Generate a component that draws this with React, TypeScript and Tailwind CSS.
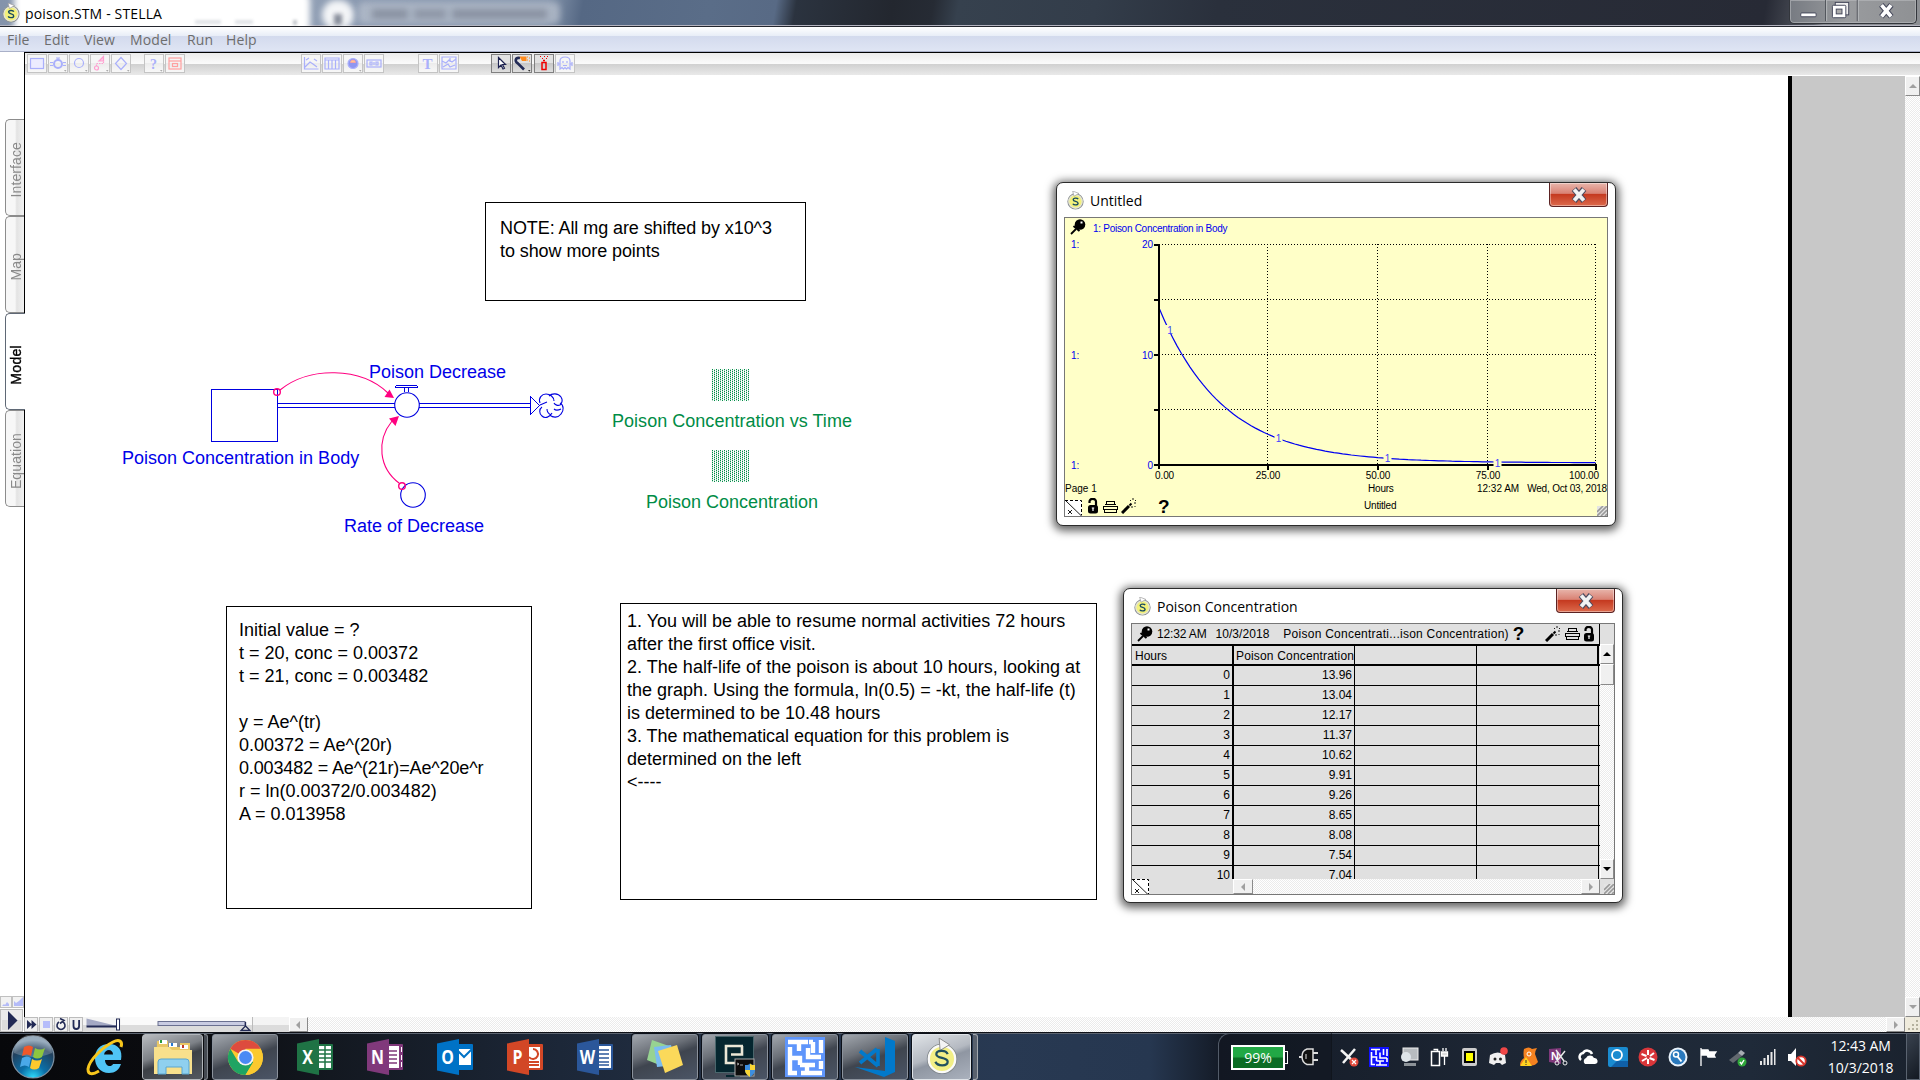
import React from "react";

const dither =
  "bg-[conic-gradient(#ffffff_25%,#ebebeb_0_50%,#ffffff_0_75%,#ebebeb_0)] bg-[length:2px_2px]";

function StellaLogo({ className }: { className?: string }) {
  return (
    <svg viewBox="0 0 20 20" className={className}>
      <circle cx="10" cy="11" r="8" fill="#f3f17c" stroke="#8b9099" strokeWidth="1.2" />
      <circle cx="10" cy="11" r="7" fill="none" stroke="#e4e4da" strokeWidth="1.2" />
      <path d="M7 0 L13.5 2.500 L8.5 5.500 Z" fill="#fff" stroke="#999" strokeWidth=".7" />
      <path d="M12.800 8.600 C12 7 7.600 7 7.600 9.100 C7.600 11.400 12.700 10.500 12.700 12.900 C12.700 15.200 8 15.100 7.200 13.400" fill="none" stroke="#174a5e" strokeWidth="1.400" />
    </svg>
  );
}

/* ---------- title, menu and toolbar ---------- */

function TitleBar() {
  return (
    <header className="relative flex h-[27px] shrink-0 items-center overflow-hidden border-b border-[#23262e] bg-[linear-gradient(100deg,#8493ab_0px,#93a1b6_300px,#8b9ab1_340px,#8595ac_540px,#556884_575px,#5a6d88_700px,#586a85_765px,#2b333f_785px,#23272f_880px,#262b34_920px,#36414e_945px,#333d4a_1080px,#2a303c_1200px,#272a35_1740px,#575b63_1790px,#8a8d92_1800px,#8d8f93_1920px)] shadow-[inset_0_-1px_0_#b4b4c0]">
      <div className="absolute -top-2 left-[14px] h-[42px] w-[296px] rounded-r-lg bg-white blur-[3px]" />
      <div className="absolute top-0 left-[322px] h-[30px] w-[32px] rounded-full bg-white/90 blur-[3px]" />
      <div className="absolute top-[2px] left-[358px] h-[22px] w-[202px] rounded-md bg-[#b4bdcb]/80 blur-[3px]" />
      <div className="absolute top-[9px] left-[372px] flex h-[10px] w-[175px] gap-[6px] blur-[3px]">
        <div className="w-[36px] bg-[#8a93a3]" />
        <div className="w-[32px] bg-[#8f98a8]" />
        <div className="flex-1 bg-[#8a93a3]" />
      </div>
      <div className="absolute top-[14px] left-[334px] h-[11px] w-[8px] bg-gray-500/80 blur-[2px]" />
      <div className="absolute top-[20px] left-[195px] flex gap-[14px] opacity-30 blur-[1.500px]">
        <div className="h-[4px] w-[26px] bg-gray-400" />
        <div className="h-[4px] w-[18px] bg-gray-400" />
        <div className="ml-[26px] h-[5px] w-[4px] bg-gray-700" />
      </div>
      <StellaLogo className="relative ml-px size-[20px]" />
      <h1 className="relative ml-[4px] font-['Open_Sans',sans-serif] text-[14px] tracking-[0.15px] whitespace-nowrap text-black">poison.STM - STELLA</h1>
      <div className="absolute top-0 left-[1789px] flex h-[24px] w-[128px] rounded-b-[5px] border border-t-0 border-[#33363c] bg-[linear-gradient(90deg,#777b82,#999b9e_45%,#8f9194)] shadow-[inset_0_0_0_1px_#b9bbbe99]">
        <svg viewBox="0 0 128 24" className="h-full w-full">
          <path d="M35.5 0V22M68.5 0V22" stroke="#44474e" />
          <path d="M36.500 0V22M69.5 0V22" stroke="#babcbf" />
          <rect x="9.500" y="13.500" width="16" height="4" rx="1" fill="#fff" stroke="#44475a" />
          <rect x="45.500" y="2.500" width="14" height="13" fill="#eee" stroke="#44475a" />
          <rect x="42.500" y="5.500" width="14" height="13" rx="1" fill="#fff" stroke="#44475a" />
          <rect x="46.500" y="9.500" width="6" height="5" fill="#aaa" stroke="#44475a" />
          <path d="M93.500 5L104 17.500M104 5L93.500 17.500" stroke="#44475a" strokeWidth="6" />
          <path d="M93.800 5.300L103.700 17.200M103.700 5.300L93.800 17.200" stroke="#fff" strokeWidth="3.800" />
        </svg>
      </div>
    </header>
  );
}

function MenuBar() {
  return (
    <nav className="flex h-[25px] shrink-0 items-center border-b border-[#a9b0c8] bg-[linear-gradient(#ffffff_0px,#e8edf7_9px,#d3daed_9px,#dfe5f4_24px)] pl-[7px] font-['Open_Sans',sans-serif] text-[14px] tracking-[0.1px] text-[#6d6d6d]">
      <span className="w-[37px]">File</span>
      <span className="w-[40px]">Edit</span>
      <span className="w-[46px]">View</span>
      <span className="w-[57px]">Model</span>
      <span className="w-[39px]">Run</span>
      <span>Help</span>
    </nav>
  );
}

function Tool({ children, active, corner }: { children: React.ReactNode; active?: boolean; corner?: boolean }) {
  return (
    <div className={active ? "h-[19px] w-[20px] border border-[#808080] bg-[linear-gradient(#e2e2e2_50%,#c8c8c8_50%,#dedede)]" : "h-[19px] w-[20px] border border-[#c4c4c4] bg-[linear-gradient(#f6f6f6_50%,#ececec_50%,#f8f8f8)]"}>
      <svg viewBox="0 0 18 17" className="h-[17px] w-[18px]" fill="none" stroke="#aab0fb" strokeWidth="1.2">
        {children}
        {corner && <path d="M15 15h2.500l-1.200 1.800z" fill={active ? "#333" : "#aaa"} stroke="none" />}
      </svg>
    </div>
  );
}

function Toolbar() {
  return (
    <div className="flex h-[23px] shrink-0 items-start border-l border-black bg-[linear-gradient(#ececec_0px,#fbfbfb_11px,#d0d0d0_11px,#e9e9e9_22px,#ffffff_22px)] pt-px pl-[2px]">
      <div className="flex gap-px">
        <Tool><rect x="2.500" y="3.500" width="13" height="10" fill="#ececff" /></Tool>
        <Tool corner><path d="M1 7.500h3M14 7.500h3M1 10.500h3M14 10.500h3M7 3h4M9 3v2" /><circle cx="9" cy="9" r="4" strokeWidth="2" /></Tool>
        <Tool corner><circle cx="9" cy="8" r="4.500" /></Tool>
        <Tool corner><path d="M5.500 11V8.500H12.500V5" stroke="#ff9fd0" strokeDasharray="1.500 1" /><path d="M8 6l4.500-4.500V6z" stroke="#ff9fd0" fill="#ffd0e8" /><circle cx="5.500" cy="13" r="2" stroke="#ff9fd0" /></Tool>
        <Tool corner><path d="M9 2.500L14.500 8.500L9 14.500L3.500 8.500Z" /></Tool>
      </div>
      <div className="ml-[13px] flex gap-px">
        <Tool corner><text x="5" y="14" fontSize="14" fontWeight="bold" fontFamily="Liberation Serif" fill="#aab0fb" stroke="none">?</text></Tool>
        <Tool><g stroke="#ffa0a0"><rect x="3" y="3" width="12" height="11" /><path d="M3 6h12" /><rect x="6.500" y="8.500" width="5" height="3" /></g></Tool>
      </div>
      <div className="ml-[116px] flex gap-px">
        <Tool><path d="M2.500 2v12h14M3 12l5-5 3 2 4 3M4 5l3-2M12 4l3 2" /></Tool>
        <Tool><path d="M2 3h14v11H2zM2 5h14M5.500 5v9M9 5v9M12.500 5v9" /></Tool>
        <Tool corner><circle cx="9" cy="8.500" r="5" fill="#8f96f0" /><path d="M6.500 7.500a2.500 2.500 0 0 1 5 0z" fill="#ffc890" stroke="#ff9f9f" strokeWidth=".8" /></Tool>
        <Tool><rect x="2" y="5" width="14" height="7" /><path d="M5 7v3h2V7zM9 7v3M11 7v3h2V7z" /></Tool>
      </div>
      <div className="ml-[34px] flex gap-px">
        <Tool><text x="3.500" y="14" fontSize="15" fontWeight="bold" fontFamily="Liberation Serif" fill="#aab0fb" stroke="none">T</text></Tool>
        <Tool><path d="M2 2h14v12H2zM2 6l4 2 3-3 3 2 4-3M3 12l5-3 2 3 5-2M10 3v4" /></Tool>
      </div>
      <div className="ml-[32px] flex gap-[1.400px]">
        <Tool active><path d="M6.500 2.500v10l2.500-2.500 2 4 1.500-.8-2-3.700h3z" stroke="#1d2250" fill="#fff" /></Tool>
        <Tool active corner><path d="M7 3C2 2 1.500 6.500 5 8.500l6 6" stroke="#222a55" strokeWidth="2.600" /><path d="M6.500 1.500h7v4.500H9z" fill="#ff8a1c" stroke="none" /><path d="M14 2h1M16 3h1M14 5h1M16 6h1" stroke="#ff8a1c" /></Tool>
        <Tool active><path d="M7 7.500h4v7H7zM8 5.500h2" stroke="#f00000" strokeWidth="1.500" /><path d="M5 1.500h1M9 1.500h1M12 1.500h1M7 3.500h1M11 3.500h1" stroke="#f00000" /></Tool>
        <Tool><path d="M4 14V6q0-4 5-4t5 4v8l-2-1.500-1.500 1.500-1.500-1.500-1.500 1.500L6 12.500zM2 9h2M14 9h2M2 7v4M16 7v4M7 6v2M11 6v2M7 10.500h4" /></Tool>
      </div>
    </div>
  );
}

/* ---------- left strip ---------- */

function SideTab({ label, selected }: { label: string; selected?: boolean }) {
  return (
    <div className={selected
      ? "ml-[5px] flex h-[97px] w-[20px] items-center justify-center rounded-l-[5px] border border-r-0 border-[#5f6875] bg-white pt-[7px] pl-px text-black"
      : "ml-[5px] flex h-[97px] w-[19px] items-center justify-center rounded-l-[5px] border border-r-0 border-[#8c8c8c] bg-[linear-gradient(90deg,#f7f7f7_50%,#e3e3e3_60%,#f2f2f2)] pt-[5px] pl-[3px] text-[#8a8a8a]"}>
      <span className={selected ? "rotate-180 text-[14px] tracking-[0.3px] [writing-mode:vertical-rl] [-webkit-text-stroke:0.4px_black]" : "rotate-180 text-[14px] tracking-[0.1px] [writing-mode:vertical-rl]"}>{label}</span>
    </div>
  );
}

function LeftStrip() {
  return (
    <aside className="relative z-10 flex h-full w-[24px] shrink-0 flex-col bg-white">
      <div className="mt-[67px]">
        <SideTab label="Interface" />
        <SideTab label="Map" />
        <SideTab label="Model" selected />
        <SideTab label="Equation" />
      </div>
      <div className="flex-1" />
      <svg viewBox="0 0 24 36" className="h-[36px] w-[24px]">
        <rect x=".5" y=".5" width="11" height="11" fill="#f2f2f2" stroke="#c0c0c0" />
        <rect x="12.500" y=".5" width="11" height="11" fill="#f2f2f2" stroke="#c0c0c0" />
        <path d="M2 10l2-2 1 1 2-3 2 2v2z" fill="#b4bbf8" />
        <path d="M14 10V5l2 2 3-2 4-4v9z" fill="#b4bbf8" />
        <rect x=".5" y="13.500" width="22" height="22" fill="#ececec" stroke="#bdbdbd" />
        <rect x="2" y="24" width="19" height="10" fill="#dcdcdc" />
        <path d="M8 15L17.500 24.500L8 34Z" fill="#222a55" />
      </svg>
    </aside>
  );
}

/* ---------- diagram ---------- */

function Diagram() {
  return (
    <svg viewBox="100 340 480 200" className="absolute top-[264px] left-[75px] h-[200px] w-[480px]" fill="none">
      <g stroke="#0000e0" strokeWidth="1" shapeRendering="crispEdges">
        <rect x="211.500" y="389.500" width="66" height="52" />
        <path d="M278 403.500H395M278 407.500H395M419 403.500H530.500M419 407.500H530.500" />
        <path d="M530.500 396.500V414.500L539.500 405.500Z" />
        <path d="M395 387.500V386.500L397 385.500H416L417.500 386.500V387.500Z" />
        <path d="M404.500 388V392M408.500 388V392" />
      </g>
      <g stroke="#0000e0" strokeWidth="1.1">
        <circle cx="407" cy="405" r="12.300" />
        <circle cx="413" cy="495" r="12.300" />
        <path d="M540 403c-2-5 2-9 6-9 4 0 8 3 8 7M549 396c3-3 9-3 12 1 2 3 1 6-1 8-2 1-5 0-6-2M560 403c4 2 4 8 1 11-3 4-8 4-11 1M554 409c1 1 3 2 7 0M552 413c-2 4-7 6-10 3-3-2-3-7 0-9M547 409c0 3 2 5 4 6M540 405l7-3" />
      </g>
      <g stroke="#ff0080" strokeWidth="1.100">
        <path d="M280 390C309 366 361 367 388 393" />
        <path d="M399 483C379 468 376 441 392 421" />
        <circle cx="277" cy="392" r="3.300" strokeWidth="1.400" />
        <circle cx="402" cy="486" r="3.300" strokeWidth="1.400" />
      </g>
      <path d="M394 398L389.500 389.500L384.500 397Z" fill="#ff0080" />
      <path d="M399 416L389 418.500L395.500 426Z" fill="#ff0080" />
    </svg>
  );
}

function NodeLabel({ className, children }: { className: string; children: React.ReactNode }) {
  return <span className={"absolute text-[18px] leading-[23px] whitespace-nowrap " + className}>{children}</span>;
}

function StippledIcon({ className, id }: { className: string; id: string }) {
  return (
    <svg viewBox="0 0 37 32" className={"absolute h-[32px] w-[37px] " + className} shapeRendering="crispEdges">
      <pattern id={id} width="4" height="2" patternUnits="userSpaceOnUse">
        <rect width="1" height="1" fill="#008c46" />
        <rect x="2" y="1" width="1" height="1" fill="#008c46" />
        <rect x="0" y="1" width="1" height="1" fill="#008c46" opacity=".3" />
        <rect x="2" y="0" width="1" height="1" fill="#008c46" opacity=".3" />
      </pattern>
      <rect width="37" height="32" fill={`url(#${id})`} />
    </svg>
  );
}

/* ---------- floating windows ---------- */

const Pin = () => (
  <svg viewBox="0 0 16 16" className="size-[16px]">
    <circle cx="10" cy="5.500" r="5.300" />
    <rect x="10.500" y="2.500" width="2" height="2" fill="#fff" />
    <path d="M6 10L1 15" stroke="#000" strokeWidth="1.800" />
    <path d="M3.500 7l6 5" stroke="#000" strokeWidth="2" />
  </svg>
);
const Lock = () => (
  <svg viewBox="0 0 12 16" className="h-[16px] w-[12px]">
    <path d="M2.500 5V3.500a3 2.500 0 0 1 6.500 0V8" fill="none" stroke="#000" strokeWidth="2.200" />
    <rect x="1" y="7" width="10" height="8.500" rx="2.500" />
    <path d="M6 9.500v3.500M4.800 10h2.400" stroke="#fff" strokeWidth="1.200" />
  </svg>
);
const Printer = () => (
  <svg viewBox="0 0 16 14" className="h-[14px] w-[16px]" fill="none" stroke="#000" shapeRendering="crispEdges">
    <path d="M4.500 5V1.500H12.500V5M2.500 4.500H13.500M1.500 6.500H15.500V9.500H1.500ZM2.500 9.500V12.500H14.500V9.500" />
  </svg>
);
const Wand = () => (
  <svg viewBox="0 0 16 16" className="size-[16px]">
    <path d="M1 15L8 8" stroke="#000" strokeWidth="3" />
    <path d="M8.500 7.500L10.500 5.500" stroke="#000" strokeWidth="2" />
    <path d="M9 2l1 1M12 0v2M15 2l-1 1M13 5h2M13.500 8l1 1M11 8v2" stroke="#000" strokeWidth=".9" />
  </svg>
);
const PageCorner = () => (
  <svg viewBox="0 0 17 16" className="h-[16px] w-[17px]" fill="none" stroke="#000">
    <rect width="17" height="16" fill="#fff" stroke="none" />
    <path d="M0 .5H16.500V15.500" strokeDasharray="3 2" />
    <path d="M1 1L16 15.500M3 10l4 4M7 10l-4 4" strokeWidth=".9" />
  </svg>
);
const Grip = () => (
  <svg viewBox="0 0 10 10" className="size-[10px]" stroke="#999" strokeWidth="1.600">
    <rect width="10" height="10" fill="#e4e4e4" stroke="none" />
    <path d="M0 10L10 0M4 10L10 4M8 10L10 8M0 6L6 0" />
  </svg>
);

function CloseButton() {
  return (
    <div className="flex h-[24px] w-[59px] items-center justify-center rounded-b-[4px] border border-t-0 border-[#5b2222] bg-[linear-gradient(#e8b6ac_0%,#d98274_45%,#c53a20_50%,#dc6a4c_100%)] shadow-[inset_0_0_0_1px_#ffffff66]">
      <svg viewBox="0 0 18 16" className="h-[16px] w-[18px]">
        <path d="M4 2L14 14M14 2L4 14" stroke="#4c4c60" strokeWidth="6" />
        <path d="M4.200 2.400L13.800 13.600M13.800 2.400L4.200 13.600" stroke="#f2f2f2" strokeWidth="3.800" />
      </svg>
    </div>
  );
}

function FloatWindow({ title, className, children }: { title: string; className: string; children: React.ReactNode }) {
  return (
    <section className={"absolute flex flex-col rounded-[7px] border border-[#2b2b2b] bg-white px-[7px] shadow-[0_2px_9px_3px_rgba(0,0,0,0.6)] " + className}>
      <div className="flex h-[34px] shrink-0 items-start justify-between">
        <div className="flex items-center gap-[5px] pt-[7px] pl-[2px]">
          <StellaLogo className="size-[19px]" />
          <h2 className="font-['Open_Sans',sans-serif] text-[14px] leading-[21px] text-black">{title}</h2>
        </div>
        <CloseButton />
      </div>
      {children}
    </section>
  );
}

const decay = Array.from({ length: 101 }, (_, t) => {
  const y = 244.8 - 11.01 * 13.96 * Math.exp(-0.0677 * t);
  return `${(94.5 + t * 4.36).toFixed(1)},${y.toFixed(1)}`;
}).join(" ");

const seriesMarks = [[105, 112], [213.500, 220], [322.500, 240], [432.500, 244.500]];

function GraphWindow() {
  return (
    <FloatWindow title="Untitled" className="top-[106px] left-[1031px] h-[344px] w-[560px]">
      <div className="relative h-[300px] w-[544px] overflow-hidden border border-[#777] bg-[#ffffc8] text-[10px] leading-[12px] text-black">
        <svg viewBox="0 0 543 298" className="absolute inset-0 h-[298px] w-[543px]">
          <g stroke="#000" strokeDasharray="1 2" fill="none" shapeRendering="crispEdges">
            <path d="M94 26.500H531M94 81.500H531M94 136.500H531M94 191.500H531" />
            <path d="M202.500 26V246M312.500 26V246M422.500 26V246M530.500 26V246" />
          </g>
          <polyline points={decay} fill="none" stroke="#0000f0" strokeWidth="1.200" />
          <path d="M94 26V251M89 27H94M89 82H94M89 137H94M89 192H94M89 247H532M531 246V252M203 247V252M313 247V252M423 247V252" fill="none" stroke="#000" strokeWidth="2" shapeRendering="crispEdges" />
          {seriesMarks.map(([x, y]) => (
            <g key={x}>
              <rect x={x - 4} y={y - 5} width="8" height="9" fill="#ffffc8" />
              <text x={x} y={y + 4} textAnchor="middle" fontSize="10" fill="#4040ff">1</text>
            </g>
          ))}
        </svg>
        <div className="absolute top-px left-[5px]"><Pin /></div>
        <span className="absolute top-[5px] left-[28px] tracking-[-0.28px] whitespace-nowrap text-[#0000f0]">1: Poison Concentration in Body</span>
        <div className="absolute top-[21px] left-[6px] flex h-[233px] w-[82px] flex-col justify-between text-[#0000f0]">
          <p className="flex justify-between"><span>1:</span><span>20</span></p>
          <p className="flex justify-between"><span>1:</span><span>10</span></p>
          <p className="flex justify-between"><span>1:</span><span>0</span></p>
        </div>
        <div className="absolute top-[252px] left-[90px] flex w-[444px] tracking-[-0.1px]">
          <span className="w-[58px]">0.00</span>
          <span className="w-[110px] text-center">25.00</span>
          <span className="w-[110px] text-center">50.00</span>
          <span className="w-[110px] text-center">75.00</span>
          <span className="flex-1 text-right">100.00</span>
        </div>
        <span className="absolute top-[265px] left-0">Page 1</span>
        <span className="absolute top-[265px] left-[303px] tracking-[-0.2px]">Hours</span>
        <div className="absolute top-[265px] right-0 flex gap-[8px] tracking-[-0.2px] whitespace-nowrap">
          <span className="tracking-normal">12:32 AM</span>
          <span>Wed, Oct 03, 2018</span>
        </div>
        <span className="absolute top-[282px] left-[299px] tracking-[-0.2px]">Untitled</span>
        <div className="absolute bottom-0 left-0 flex items-end gap-[5px]">
          <PageCorner />
          <div className="mb-[2px] flex items-end gap-[3px]"><Lock /><Printer /><Wand /></div>
        </div>
        <span className="absolute top-[279px] left-[93px] text-[19px] leading-[19px] font-bold">?</span>
        <div className="absolute right-0 bottom-0"><Grip /></div>
      </div>
    </FloatWindow>
  );
}

const rows: [string, string][] = [
  ["0", "13.96"], ["1", "13.04"], ["2", "12.17"], ["3", "11.37"], ["4", "10.62"], ["5", "9.91"],
  ["6", "9.26"], ["7", "8.65"], ["8", "8.08"], ["9", "7.54"], ["10", "7.04"],
];

function ScrollArrow({ d, className, color = "#a0a0a0" }: { d: string; className: string; color?: string }) {
  return (
    <div className={"flex shrink-0 items-center justify-center border border-r-[#8a8a8a] border-b-[#8a8a8a] border-t-white border-l-white bg-[#f0f0f0] " + className}>
      <svg viewBox="0 0 8 8" className="size-[8px]"><path d={d} fill={color} /></svg>
    </div>
  );
}

function TableWindow() {
  return (
    <FloatWindow title="Poison Concentration" className="top-[512px] left-[1098px] h-[315px] w-[500px]">
      <div className="flex h-[272px] w-[484px] border border-[#777] bg-[#e0e0e0] text-[12px] leading-[18px] text-black">
        <div className="flex w-[468px] flex-col">
          <div className="flex h-[20px] shrink-0 items-center border-r border-black pr-[4px] pl-[5px]">
            <Pin />
            <span className="ml-[4px] tracking-[-0.15px]">12:32 AM</span>
            <span className="ml-[9px] tracking-[0.05px]">10/3/2018</span>
            <span className="ml-[14px] tracking-[0.25px] whitespace-nowrap">Poison Concentrati...ison Concentration)</span>
            <span className="ml-[4px] text-[19px] leading-[18px] font-bold">?</span>
            <div className="ml-auto flex items-center gap-[3px]"><Wand /><Printer /><Lock /></div>
          </div>
          <div className="h-[235px] overflow-hidden">
            <div className="grid h-[22px] grid-cols-[102px_121px_122px_122px] border-y-2 border-black">
              <span className="border-r-2 border-black pl-[3px] leading-[20px]">Hours</span>
              <span className="overflow-hidden border-r border-black pl-[2px] leading-[20px] tracking-[0.17px] whitespace-nowrap">Poison Concentration</span>
              <span className="border-r border-black" />
              <span className="border-r-2 border-black" />
            </div>
            {rows.map(([hour, value]) => (
              <div key={hour} className="grid h-[20px] grid-cols-[102px_121px_122px_122px] border-b border-black text-right">
                <span className="border-r-2 border-black pr-[2px]">{hour}</span>
                <span className="border-r border-black pr-[2px]">{value}</span>
                <span className="border-r border-black" />
                <span className="border-r border-black" />
              </div>
            ))}
          </div>
          <div className="flex h-[15px] shrink-0">
            <div className="h-[15px] w-[101px] overflow-hidden"><PageCorner /></div>
            <ScrollArrow d="M6 0v8L2 4z" className="w-[20px]" />
            <div className={"flex-1 " + dither} />
            <ScrollArrow d="M2 0v8L6 4z" className="w-[19px]" />
          </div>
        </div>
        <div className="flex w-[14px] flex-col pt-[20px]">
          <ScrollArrow d="M0 6h8L4 2z" className="h-[20px]" color="#000" />
          <div className="h-[21px] border border-r-[#8a8a8a] border-b-[#8a8a8a] border-t-white border-l-white bg-[#f0f0f0]" />
          <div className={"flex-1 " + dither} />
          <ScrollArrow d="M0 2h8L4 6z" className="h-[20px]" color="#000" />
          <div className="flex h-[15px] items-end justify-end"><Grip /></div>
        </div>
      </div>
    </FloatWindow>
  );
}

/* ---------- canvas ---------- */

function Canvas() {
  return (
    <main className="relative flex-1 border-l border-black bg-white text-[18px] leading-[23px] text-black">
      <div className="absolute top-[126px] left-[460px] h-[99px] w-[321px] border border-black pt-[14px] pl-[14px] tracking-[-0.08px]">
        <p>NOTE: All mg are shifted by x10^3</p>
        <p>to show more points</p>
      </div>
      <Diagram />
      <NodeLabel className="top-[285px] left-[344px] text-[#0000e8]">Poison Decrease</NodeLabel>
      <NodeLabel className="top-[371px] left-[97px] text-[#0000e8]">Poison Concentration in Body</NodeLabel>
      <NodeLabel className="top-[439px] left-[319px] text-[#0000e8]">Rate of Decrease</NodeLabel>
      <StippledIcon id="stipple-graph" className="top-[293px] left-[687px]" />
      <NodeLabel className="top-[334px] left-[587px] tracking-[0.03px] text-[#008c46]">Poison Concentration vs Time</NodeLabel>
      <StippledIcon id="stipple-table" className="top-[374px] left-[687px]" />
      <NodeLabel className="top-[415px] left-[621px] text-[#008c46]">Poison Concentration</NodeLabel>
      <div className="absolute top-[530px] left-[201px] h-[303px] w-[306px] border border-black pt-[12px] pl-[12px]">
        <p>Initial value = ?</p>
        <p>t = 20, conc = 0.00372</p>
        <p>t = 21, conc = 0.003482</p>
        <p>&nbsp;</p>
        <p>y = Ae^(tr)</p>
        <p>0.00372 = Ae^(20r)</p>
        <p className="tracking-[-0.15px]">0.003482 = Ae^(21r)=Ae^20e^r</p>
        <p>r = ln(0.00372/0.003482)</p>
        <p>A = 0.013958</p>
      </div>
      <div className="absolute top-[527px] left-[595px] h-[297px] w-[477px] border border-black pt-[6px] pl-[6px] whitespace-nowrap">
        <p>1. You will be able to resume normal activities 72 hours</p>
        <p>after the first office visit.</p>
        <p className="tracking-[0.02px]">2. The half-life of the poison is about 10 hours, looking at</p>
        <p>the graph. Using the formula, ln(0.5) = -kt, the half-life (t)</p>
        <p>is determined to be 10.48 hours</p>
        <p className="tracking-[-0.04px]">3. The mathematical equation for this problem is</p>
        <p>determined on the left</p>
        <p>&lt;----</p>
      </div>
      <GraphWindow />
      <TableWindow />
    </main>
  );
}

function ControlRow() {
  return (
    <div className="flex h-[15px] shrink-0">
      <svg viewBox="0 0 265 15" className="h-[15px] w-[265px] shrink-0" fill="none">
        <rect width="265" height="15" fill="#f4f4f4" />
        <rect y="8" width="265" height="7" fill="#dcdcdc" />
        <g fill="#f0f0f0" stroke="#bcbcbc"><rect x=".5" y=".5" width="13" height="14" /><rect x="15.500" y=".5" width="13" height="14" /><rect x="30.500" y=".5" width="13" height="14" /><rect x="45.500" y=".5" width="13" height="14" /></g>
        <path d="M3 3l5 4.500L3 12zM7.500 3l5 4.500L7.500 12z" fill="#222a55" />
        <rect x="19" y="4" width="7" height="7" fill="#b6bdfa" />
        <path d="M35 5a4 4 0 1 0 4 0M36 1.500l4 2-4 3" stroke="#222a55" strokeWidth="1.600" />
        <path d="M49.500 3v6q0 3 2.800 3t2.800-3V3" stroke="#222a55" strokeWidth="1.800" />
        <path d="M62.500 1.500L93 9H62.500Z" fill="#a4a9c4" />
        <path d="M62.500 9.500H93" stroke="#222a55" strokeWidth="2" />
        <rect x="92.500" y="2" width="3" height="11" fill="#fff" stroke="#222a55" />
        <rect x="97" y="0" width="131" height="8" fill="#fafafa" />
        <rect x="134" y="4.500" width="87" height="4" fill="#c9cce2" stroke="#6a7090" />
        <path d="M221.500 5v4M217 13.500h9l-4.500-4.500z" stroke="#222a55" strokeWidth="1.300" />
        <path d="M228.500 0v15" stroke="#bbb" />
      </svg>
      <ScrollArrow d="M5 0v8L1 4z" className="w-[19px]" />
      <div className={"flex-1 " + dither} />
      <ScrollArrow d="M2 0v8L6 4z" className="w-[19px]" />
      <svg viewBox="0 0 15 15" className="size-[15px] shrink-0"><rect width="15" height="15" fill="#efebdc" /><path d="M11 3h2v2h-2zM11 7h2v2h-2zM11 11h2v2h-2zM7 7h2v2H7zM7 11h2v2H7zM3 11h2v2H3z" fill="#b5b19d" /></svg>
    </div>
  );
}

/* ---------- taskbar ---------- */

function Slot({ kind = "plain", children }: { kind?: "plain" | "open" | "active"; children: React.ReactNode }) {
  const look = {
    plain: "flex h-[46px] w-[66px] shrink-0 items-center justify-center",
    open: "flex h-[46px] w-[66px] shrink-0 items-center justify-center rounded-[3px] border border-[#8b929c] bg-[linear-gradient(160deg,#a2a7ae_0%,#6b7078_35%,#3f454f_52%,#4b5566_100%)] shadow-[0_0_0_1px_#0c1018]",
    active: "flex h-[46px] w-[59px] shrink-0 items-center justify-center rounded-[3px] border border-[#dfe3e8] bg-[linear-gradient(160deg,#e0e3e7_0%,#b4b9c1_45%,#8f96a2_55%,#aab1bd_100%)] shadow-[0_0_0_1px_#0c1018]",
  }[kind];
  return <div className={look}>{children}</div>;
}

function OfficeIcon({ letter, color, children }: { letter: string; color: string; children: React.ReactNode }) {
  return (
    <svg viewBox="0 0 36 36" className="size-[36px]">
      <rect x="16" y="5" width="20" height="26" rx="1" fill={color} />
      {children}
      <path d="M0 4.500L22 0V36L0 31.500Z" fill={color} />
      <text transform="translate(10.500 25) scale(.84 1)" textAnchor="middle" fontFamily="Open Sans" fontWeight="bold" fontSize="19" fill="#fff">{letter}</text>
    </svg>
  );
}

const tray: { id: string; art: React.ReactNode }[] = [
  { id: "pen", art: <><path d="M2 3l13 12M4 16L16 2" stroke="#f4f4f4" strokeWidth="2.500" /><circle cx="15" cy="15" r="4.500" fill="#e24a3c" /><path d="M13 13l4 4M17 13l-4 4" stroke="#fff" strokeWidth="1.200" /></> },
  { id: "maze", art: <><rect width="20" height="20" fill="#1010ff" /><path d="M2 2.500H11M7 2.500V8M11 5.500V11H18M14.500 2V8M18 2V9M2.500 5V17.500H6M2.500 10H7.500V14M7.500 14H15M11 14V18M7 18H18M18 11V15" stroke="#fff" strokeWidth="1.600" fill="none" /></> },
  { id: "display", art: <><rect x="4" y="1" width="15" height="12" fill="#b8bcc0" stroke="#eee" /><circle cx="7" cy="10" r="5" fill="#dfe5ea" /><path d="M5 16h12v3H5z" fill="#8c9298" /></> },
  { id: "battery", art: <><path d="M2.500 4.500h8v14h-8zM4.500 2.500h4v2" fill="none" stroke="#fff" strokeWidth="1.500" /><path d="M12.500 5h6v4h-6zM14 1v3M17 1v3M15.500 9v9" stroke="#fff" strokeWidth="1.300" fill="#ddd" /></> },
  { id: "chip", art: <><rect x="3" y="1" width="15" height="18" rx="2" fill="#ccc" /><rect x="5" y="4" width="11" height="12" fill="#000" /><rect x="7" y="6" width="7" height="8" fill="#ffff00" /></> },
  { id: "discord", art: <><path d="M2 8q8-5 15 0l1 8-4 2-2-2H8l-2 2-5-2z" fill="#f0f0f0" /><circle cx="7" cy="12" r="1.500" fill="#222" /><circle cx="12.500" cy="12" r="1.500" fill="#222" /><circle cx="16" cy="4" r="3.800" fill="#f04747" /></> },
  { id: "avast", art: <><path d="M6 2q5-3 8 0l5-1q-2 3-2 6l3 8q-4 5-9 3-5 2-9 0 0-4 4-7-1-5 0-9z" fill="#f58220" /><path d="M8 10l6 9H2z" fill="#ffd21f" /><path d="M8 13v3M8 17v1" stroke="#333" fill="none" /><circle cx="11" cy="7" r="2" fill="none" stroke="#fff" /></> },
  { id: "onenote-clip", art: <><path d="M1 2l12-1v16L1 15z" fill="#80397b" /><text x="3" y="13" fontSize="11" fontWeight="bold" fill="#fff">N</text><path d="M8 3l8 11M17 4L9 14" stroke="#e8e8e8" strokeWidth="1.500" /><circle cx="9" cy="16" r="2" fill="none" stroke="#eee" /><circle cx="17" cy="16" r="2" fill="none" stroke="#eee" /></> },
  { id: "cloud", art: <><path d="M3 13a4 4 0 0 1 2-7 5 5 0 0 1 9 1" fill="none" stroke="#fff" strokeWidth="2.500" /><path d="M7 17a3.500 3.500 0 0 1 1-6 4.500 4.500 0 0 1 8 0 3 3 0 0 1 1 6z" fill="#fff" /></> },
  { id: "update", art: <><rect width="20" height="20" rx="2" fill="#1a8bd0" /><circle cx="9" cy="8" r="5" fill="none" stroke="#fff" strokeWidth="1.800" /><path d="M9 14h11v6H3z" fill="#1060a8" /></> },
  { id: "red", art: <><circle cx="10" cy="10" r="9.500" fill="#d9363a" /><path d="M10 3v5M10 12v5M3.500 7l5 2M11.500 11l5 2M4 14l5-3M12 9l4-3" stroke="#fff" strokeWidth="2" /></> },
  { id: "key", art: <><circle cx="10" cy="10" r="9.500" fill="#eaf3fb" /><circle cx="10" cy="10" r="7.500" fill="#2a79bd" /><circle cx="8" cy="7.500" r="2.500" fill="none" stroke="#fff" strokeWidth="1.500" /><path d="M9.500 9.500l4 5" stroke="#fff" strokeWidth="2" /></> },
  { id: "flag", art: <path d="M3 1v18M4 3h6l1 2h7l-2 3 1 2h-7l-1-2H4z" fill="#fff" stroke="#fff" strokeWidth="1.300" /> },
  { id: "usb", art: <><path d="M1 13l9-7 4 3-9 7z" fill="#62686f" /><path d="M10 6l3-3 4 3-3 3z" fill="#a8adb3" /><circle cx="14" cy="15" r="4.500" fill="#2fa63a" /><path d="M12 15l1.500 2 2.500-4" stroke="#fff" fill="none" strokeWidth="1.400" /></> },
  { id: "signal", art: <path d="M3 14h2v4H3zM6.500 11h2v7h-2zM10 8h2v10h-2zM13.500 5h2v13h-2zM17 2h1.500v16H17z" fill="#e6e6e6" /> },
  { id: "volume", art: <><path d="M1 7h3l5-6v18l-5-5H1z" fill="#fff" /><circle cx="14" cy="14" r="4.700" fill="#fff" stroke="#d9342b" strokeWidth="1.800" /><path d="M11 11l6 6" stroke="#d9342b" strokeWidth="2" /></> },
];

function Taskbar() {
  return (
    <footer className="relative flex h-[48px] shrink-0 items-start border-t border-[#101218] bg-[linear-gradient(90deg,#07080b_0px,#0b0c10_200px,#131820_330px,#1c2738_560px,#26344a_800px,#283952_1000px,#263750_1150px,#141b27_1220px,#1d2634_1500px,#1f2a39_1750px,#1a222e_1920px)] shadow-[inset_0_1px_0_#5c6470]">
      <div className="flex items-start gap-[4px] pt-px">
        <div className="flex h-[46px] w-[68px] items-center justify-center pr-[2px]">
          <svg viewBox="0 0 44 44" className="size-[44px]">
            <defs>
              <radialGradient id="orb" cx=".5" cy="1" r=".9"><stop offset="0" stopColor="#2fe0ff" /><stop offset=".35" stopColor="#0b6fa8" /><stop offset=".8" stopColor="#22405c" /><stop offset="1" stopColor="#7d96ac" /></radialGradient>
            </defs>
            <circle cx="22" cy="22" r="21" fill="url(#orb)" stroke="#7f93a5" strokeWidth="1.200" />
            <path d="M3 18a19 19 0 0 1 38 0q-19 8-38 0z" fill="#fff" opacity=".22" />
            <path d="M13 12q5-3 9 0l-2 9q-4-3-9 0z" fill="#f0582a" />
            <path d="M24 13q5 3 10 0l-3 9q-5 3-9 0z" fill="#8dc63f" />
            <path d="M11 23q5-3 9 0l-2 9q-4-3-9 0z" fill="#4aa8e8" />
            <path d="M21 24q5 3 10 0l-3 9q-5 3-9 0z" fill="#fdc92e" />
          </svg>
        </div>
        <Slot>
          <svg viewBox="0 0 40 40" className="size-[40px]">
            <path d="M13 23h23c2-10-3-16-12-16C15 7 10 13 10 21s5 15 14 15c6 0 10-3 12-9h-8c-2 4-8 2-8-4z" fill="#4fc4f5" />
            <path d="M19 17.500c1-6 9-6 9 0z" fill="#0b0c10" />
            <path d="M36 10c2-6-2-8-8-5C18 10 4 23 3 32c0 7 6 5 11 2" fill="none" stroke="#f7c61c" strokeWidth="3" />
          </svg>
        </Slot>
        <div className="flex">
          <div className="w-[61px] overflow-hidden rounded-[3px]">
            <div className="flex h-[46px] w-[61px] items-center justify-center rounded-[3px] border border-[#b2b6bb] bg-[linear-gradient(160deg,#b9bcc0_0%,#7d8187_40%,#3c4046_55%,#53585f_100%)]">
              <svg viewBox="0 0 40 38" className="h-[38px] w-[40px]">
                <path d="M4 3h11v6h12V5h10v30H3z" fill="#e9c766" />
                <path d="M6 2h8v4H6zM16 5h8v4h-8zM27 7h8v4h-8z" fill="#fff" />
                <path d="M7 2h2v3H7z" fill="#2a9c3e" /><path d="M18 5h2v3h-2z" fill="#2979d0" /><path d="M29 7h2v3h-2z" fill="#c0392b" />
                <path d="M1 9h15l3 3h20v24H1z" fill="#f8e08c" />
                <path d="M5 36V24q0-3 3-3h25q3 0 3 3v12h-7V29H13v7z" fill="#8fd0ef" stroke="#5ba6cf" />
              </svg>
            </div>
          </div>
          <div className="ml-px h-[46px] w-[4px] rounded-r-[3px] border border-l-0 border-[#80858c] bg-[#454a52]" />
        </div>
        <Slot kind="open">
          <svg viewBox="0 0 38 38" className="size-[37px]">
            <circle cx="19" cy="19" r="18" fill="#fbc92f" />
            <path d="M19 19L3.400 10A18 18 0 0 1 34.600 10H19z" fill="#dd4b3e" />
            <path d="M3.400 10A18 18 0 0 0 19 37l8-13.500L19 19 11.500 23.500z" fill="#1fa463" />
            <path d="M19 11H34.900A18 18 0 0 1 19 37l8-13z" fill="#fbc92f" />
            <circle cx="19" cy="19" r="8.300" fill="#f5f5f5" /><circle cx="19" cy="19" r="6.600" fill="#4a8af4" />
          </svg>
        </Slot>
        <Slot><OfficeIcon letter="X" color="#1f7345"><path d="M22 7h12v22H22z" fill="#fff" /><path d="M22 11h12M22 15h12M22 19h12M22 23h12M28 7v22" stroke="#1f7345" strokeWidth="1.500" /></OfficeIcon></Slot>
        <Slot><OfficeIcon letter="N" color="#80397b"><path d="M22 7h10v22H22z" fill="#fff" /><path d="M22 12h8M22 16h8M22 20h8M22 24h8M33 5v26" stroke="#80397b" strokeWidth="1.500" /><path d="M34.500 8v5M34.500 16v5M34.500 23v5" stroke="#fff" /></OfficeIcon></Slot>
        <Slot><OfficeIcon letter="O" color="#0072c6"><path d="M20 10h14v16H20z" fill="#fff" /><path d="M20 11l7 7 8-8" fill="none" stroke="#0072c6" strokeWidth="2" /></OfficeIcon></Slot>
        <Slot><OfficeIcon letter="P" color="#d24726"><path d="M20 8h13v21H20z" fill="#fff" /><path d="M26 10a5 5 0 1 1-4 8M21 23h11M21 26h11" fill="none" stroke="#d24726" strokeWidth="2" /></OfficeIcon></Slot>
        <Slot><OfficeIcon letter="W" color="#2b579a"><path d="M21 7h13v22H21z" fill="#fff" /><path d="M21 11h11M21 15h11M21 19h11M21 23h11M21 26h11" stroke="#2b579a" strokeWidth="1.600" /></OfficeIcon></Slot>
        <Slot kind="open">
          <svg viewBox="0 0 40 36" className="h-[36px] w-[40px]">
            <path d="M7 1l17 6-7 20L2 21z" fill="#97d391" /><path d="M9 8l17-2 5 20-19 2z" fill="#7bbcf0" /><path d="M13 12l19-6 6 20-18 8z" fill="#fbd95a" />
          </svg>
        </Slot>
        <Slot kind="open">
          <svg viewBox="0 0 42 44" className="h-[44px] w-[42px]">
            <rect x="1.500" y="1.500" width="38" height="36" fill="#05262f" stroke="#4a666c" />
            <path d="M29 11H12V28H25M17 19.500H28V11" fill="none" stroke="#eae7d6" strokeWidth="2.600" />
            <path d="M12 41h14" stroke="#05262f" strokeWidth="2" />
            <rect x="21" y="24" width="19" height="17" fill="#0c0c0c" stroke="#aaa" />
            <path d="M23 28l2 1-2 1M26 30h3" fill="none" stroke="#ccc" strokeWidth=".8" />
            <path d="M31 30q5 0 5-2 0 2 5 2v5q0 4-5 7-5-3-5-7z" fill="#3d8fe0" /><path d="M36 28q0 2 5 2v5h-5zM31 35h5v7q-5-3-5-7z" fill="#f9d534" />
          </svg>
        </Slot>
        <Slot kind="open">
          <svg viewBox="0 0 40 40" className="size-[40px]">
            <rect width="40" height="40" fill="#5e95fb" />
            <g fill="none" stroke="#fff" strokeWidth="4.400">
              <path d="M3 5H23M14 5V14M23 11V20H36M28 5V16M36 3V16M28 5H24" />
              <path d="M5 10V36H12M5 21H15V28M15 28H30M22 28V36M16 36H37M36 24V32" />
            </g>
          </svg>
        </Slot>
        <Slot kind="open">
          <svg viewBox="0 0 40 40" className="size-[40px]">
            <path d="M30 0l10 4v31l-11 5L0 30l30 4z" fill="#0179cb" />
            <path d="M22 12L5 26M5 14l18 15M23 12v17" fill="none" stroke="#0179cb" strokeWidth="3.600" />
          </svg>
        </Slot>
        <div className="flex">
          <Slot kind="active">
            <svg viewBox="0 0 36 40" className="h-[38px] w-[34px]">
              <circle cx="18" cy="22" r="15.500" fill="#f2ef86" stroke="#7f858e" strokeWidth="1.200" /><circle cx="18" cy="22" r="14" fill="none" stroke="#fafafa" strokeWidth="2.400" />
              <path d="M15 0l11 7-10 6z" fill="#f4f4f4" stroke="#888" />
              <path d="M24 17c-2-5-12-4-12 0 0 5 12 3 12 8 0 5-11 5-13 0" fill="none" stroke="#20505f" strokeWidth="2.400" />
            </svg>
          </Slot>
          <div className="ml-[2px] h-[46px] w-[5px] rounded-r-[3px] border border-l-0 border-[#a2a7ae] bg-[#59616e]" />
        </div>
      </div>
      <div className="absolute top-0 right-0 flex h-[47px] w-[702px]">
        <div className="flex w-[114px] items-center rounded-tl-[12px] border-t border-l border-[#525b68] border-r border-r-[#10151d] bg-[#10161f]/60 pl-[12px]">
          <div className="flex h-[25px] w-[54px] items-center justify-center border-2 border-white bg-[linear-gradient(#22a845_45%,#0b6c24_55%)] font-['Open_Sans',sans-serif] text-[14px] tracking-[-0.1px] text-white">99%</div>
          <div className="h-[13px] w-[3px] border border-l-0 border-white" />
          <svg viewBox="0 0 22 20" className="ml-[10px] h-[20px] w-[22px]"><path d="M1 10h4M20 6h-5M20 13h-5" stroke="#ddd" strokeWidth="2" /><path d="M15 2H9Q4 3.500 4 9.500T9 17.500h6z" fill="#111" stroke="#ddd" strokeWidth="1.500" /><path d="M8 7v5" stroke="#ddd" /></svg>
        </div>
        <div className="flex items-center pl-[2px]">
          {tray.map(({ id, art }) => (
            <div key={id} className="flex w-[29.900px] justify-center"><svg viewBox="0 0 20 20" className="size-[20px]">{art}</svg></div>
          ))}
        </div>
        <div className="flex flex-1 flex-col items-center justify-center pt-px pl-[3px] font-['Open_Sans',sans-serif] text-[14px] leading-[22px] tracking-[-0.05px] text-white">
          <span className="whitespace-nowrap">12:43 AM</span>
          <span>10/3/2018</span>
        </div>
        <div className="h-[47px] w-[14px] border border-[#5a6370] bg-[linear-gradient(135deg,#39424f,#131922)]" />
      </div>
    </footer>
  );
}

export default function App() {
  return (
    <div className="flex h-[1080px] w-[1920px] flex-col overflow-hidden bg-white font-['Liberation_Sans',Arial,sans-serif]">
      <TitleBar />
      <MenuBar />
      <div className="flex h-[980px] shrink-0">
        <LeftStrip />
        <div className="flex min-w-0 flex-1 flex-col border-t border-black">
          <Toolbar />
          <div className="flex min-h-0 flex-1">
            <Canvas />
            <div className="w-[117px] border-l-4 border-black bg-[#c8c8c8]" />
            <div className={"flex w-[15px] flex-col justify-between " + dither}>
              <ScrollArrow d="M0 6h8L4 2z" className="h-[20px]" />
              <ScrollArrow d="M0 2h8L4 6z" className="h-[20px]" />
            </div>
          </div>
          <ControlRow />
        </div>
      </div>
      <Taskbar />
    </div>
  );
}
